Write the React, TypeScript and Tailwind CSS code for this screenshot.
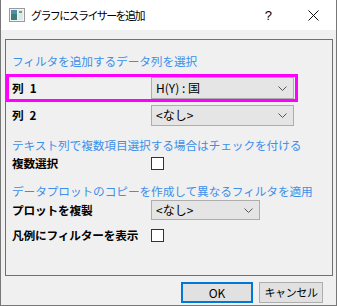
import { ReactNode } from "react";

const JP = "font-['Noto_Sans_CJK_JP','Noto_Sans',sans-serif]";

function Chevron() {
  return (
    <svg width="9" height="5" viewBox="0 0 9 5" className="shrink-0">
      <path d="M0.5 0.5 L4.5 4.5 L8.5 0.5" fill="none" stroke="#555" strokeWidth="1" />
    </svg>
  );
}

function Combo({ value, w, h }: { value: string; w: string; h: string }) {
  return (
    <div
      className={`${w} ${h} flex items-center justify-between pl-[4px] pr-[6px] bg-[#e5e5e5] border border-[#adadad] text-[12px] text-black`}
    >
      <span className="leading-none">{value}</span>
      <Chevron />
    </div>
  );
}

function Check() {
  return <div className="w-[13px] h-[13px] bg-white border border-[#333]" />;
}

function Head({ children }: { children: ReactNode }) {
  return (
    <div className="h-[14px] flex items-center pl-[6px] text-[11.7px] leading-none tracking-[-0.1px] text-[#3c8fea] whitespace-nowrap">
      {children}
    </div>
  );
}

function Label({ children }: { children: ReactNode }) {
  return (
    <span className="w-[145px] pl-[6px] font-bold text-[11.7px] leading-none text-black whitespace-nowrap tracking-[-0.2px]">
      {children}
    </span>
  );
}

function AppIcon() {
  return (
    <svg width="16" height="14" viewBox="0 0 16 14">
      <rect x="0.5" y="0.5" width="15" height="13" fill="#f4f4f4" stroke="#9a9a9a" />
      <rect x="2" y="2" width="6" height="10" fill="#3b7d78" />
      <rect x="2" y="2" width="6" height="4" fill="#4a8fb0" />
      <rect x="9" y="2" width="5" height="10" fill="#dfe8e8" />
      <rect x="10" y="3" width="3" height="2" fill="#6ba77a" />
    </svg>
  );
}

export default function App() {
  return (
    <div className={`w-[337px] h-[306px] flex flex-col bg-[#f0f0f0] border-x border-b border-[#777] ${JP}`}>
      <div className="h-[30px] shrink-0 bg-white flex items-center pl-[8px]">
        <AppIcon />
        <span className="ml-[6px] text-[11px] tracking-[-1.6px] text-black leading-none">
          グラフにスライサーを追加
        </span>
        <span className="ml-auto text-[13px] text-black leading-none font-['Liberation_Sans',sans-serif]">?</span>
        <svg width="11" height="11" viewBox="0 0 11 11" className="ml-[36px] mr-[17px]">
          <path d="M0.5 0.5 L10.5 10.5 M10.5 0.5 L0.5 10.5" stroke="#111" strokeWidth="1" />
        </svg>
      </div>

      <div className="mt-[9px] ml-[4px] w-[328px] h-[237px] border border-[#707070] flex flex-col">
        <div className="mt-[14px]">
          <Head>フィルタを追加するデータ列を選択</Head>
        </div>
        <div className="mt-[6px] w-[292px] h-[28px] border-[3px] border-[#ff00ff] flex items-center">
          <span className="w-[142px] pl-[3px] font-bold text-[11.7px] leading-none text-black">
            列<span className="ml-[6px]">1</span>
          </span>
          <Combo value="H(Y) : 国" w="w-[143px]" h="h-[22px]" />
        </div>
        <div className="mt-[2px] h-[22px] flex items-center">
          <Label>
            列<span className="ml-[6px]">2</span>
          </Label>
          <Combo value="<なし>" w="w-[143px]" h="h-[21px]" />
        </div>
        <div className="mt-[12px]">
          <Head>テキスト列で複数項目選択する場合はチェックを付ける</Head>
        </div>
        <div className="mt-[3px] h-[16px] flex items-center">
          <Label>複数選択</Label>
          <Check />
        </div>
        <div className="mt-[13px]">
          <Head>データプロットのコピーを作成して異なるフィルタを適用</Head>
        </div>
        <div className="mt-[2px] h-[20px] flex items-center">
          <Label>プロットを複製</Label>
          <Combo value="<なし>" w="w-[109px]" h="h-[20px]" />
        </div>
        <div className="mt-[8px] h-[14px] flex items-center">
          <Label>凡例にフィルターを表示</Label>
          <Check />
        </div>
      </div>

      <div className="mt-[6px] flex justify-end gap-[6px] pr-[13px]">
        <button className="w-[72px] h-[21px] bg-[#e1e1e1] border-2 border-[#0078d7] text-[12px] text-black leading-none">
          OK
        </button>
        <button className="w-[64px] h-[21px] bg-[#e1e1e1] border border-[#adadad] text-[11px] tracking-[-0.4px] text-black leading-none">
          キャンセル
        </button>
      </div>
    </div>
  );
}
